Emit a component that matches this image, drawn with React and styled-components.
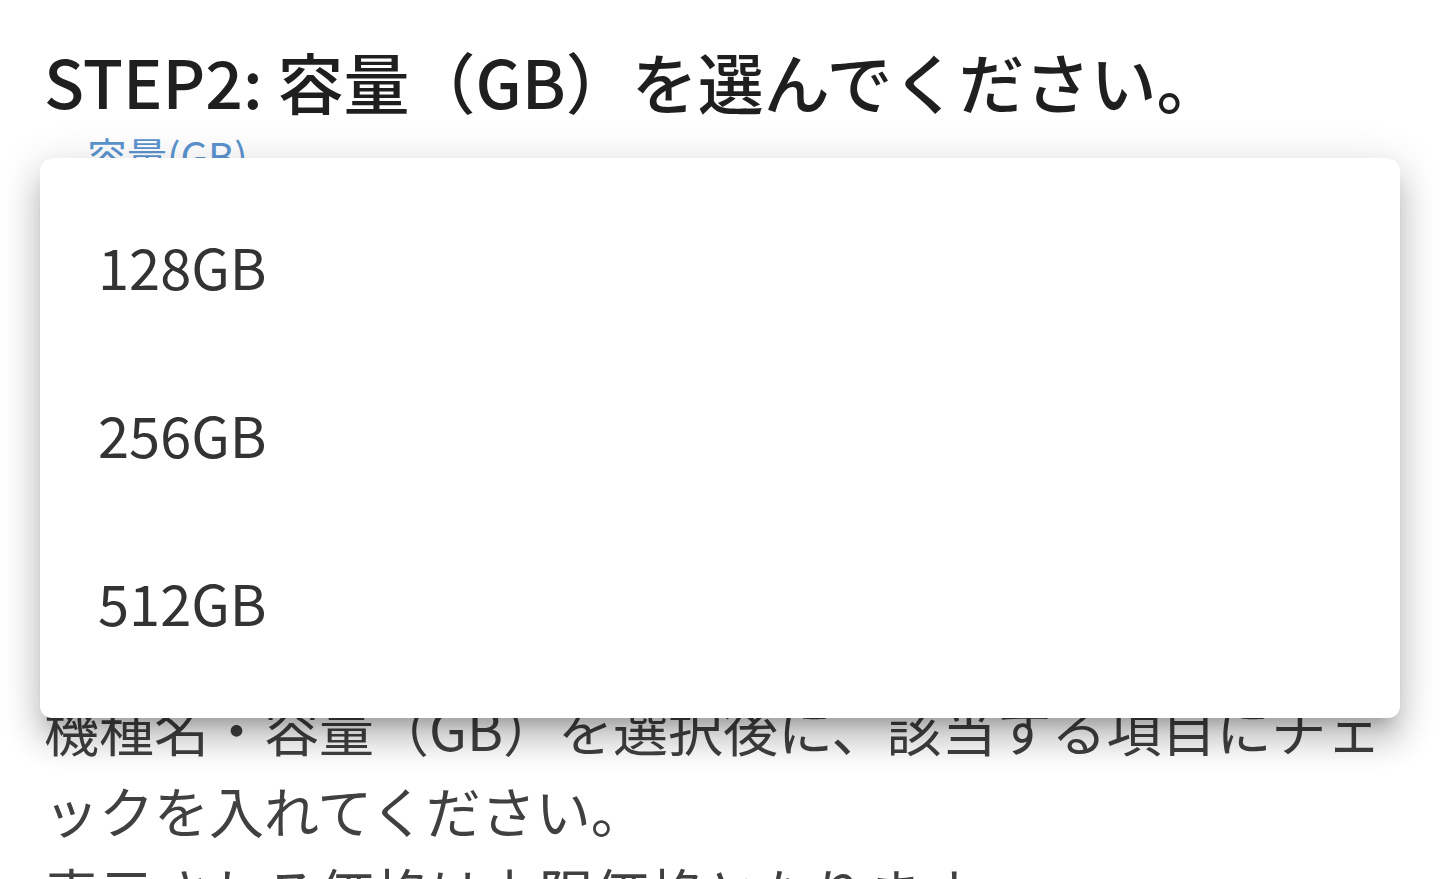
import React from 'react';
import styled, { createGlobalStyle } from 'styled-components';

const GlobalStyle = createGlobalStyle`
  html, body {
    margin: 0;
    padding: 0;
    background: #ffffff;
    font-family: "Noto Sans CJK JP", "Noto Sans", sans-serif;
    color: #2b2b2b;
    overflow: hidden;
  }
`;

const Page = styled.div`
  height: 879px;
  padding: 34px 40px 0 44px;
  box-sizing: border-box;
  overflow: hidden;
`;

const Title = styled.h2`
  margin: 0;
  font-size: 66px;
  line-height: 92px;
  font-weight: 500;
  color: #1f1f1f;
`;

const SelectWrap = styled.div`
  position: relative;
  margin: 32px 0 0 -4px;
`;

const Outlined = styled.div`
  position: relative;
  height: 168px;
  border: 3px solid #c9d6e3;
  border-radius: 12px;
  box-sizing: border-box;
`;

const FloatLabel = styled.span`
  position: absolute;
  top: -30px;
  left: 30px;
  padding: 0 14px;
  background: #ffffff;
  font-size: 40px;
  line-height: 48px;
  color: #5b94cf;
`;

const Menu = styled.ul`
  position: absolute;
  top: 0;
  left: 0;
  right: 0;
  margin: 0;
  padding: 23px 0 33px;
  list-style: none;
  background: #ffffff;
  border-radius: 12px;
  box-shadow: 0 15px 15px -9px rgba(0, 0, 0, 0.2),
    0 24px 30px 3px rgba(0, 0, 0, 0.14),
    0 9px 42px 6px rgba(0, 0, 0, 0.12);
  z-index: 10;
`;

const Option = styled.li`
  height: 168px;
  display: flex;
  align-items: center;
  padding-left: 58px;
  font-size: 56px;
  font-weight: 400;
  color: #333333;
  background: ${(p) => (p.selected ? 'rgba(25, 118, 210, 0.08)' : 'transparent')};
`;

const Hidden = styled.div`
  height: 360px;
`;

const Note = styled.p`
  margin: 0;
  font-size: 55px;
  line-height: 82px;
  color: #404040;
`;

const options = ['128GB', '256GB', '512GB'];

export default function App() {
  return (
    <>
      <GlobalStyle />
      <Page>
        <Title>STEP2: 容量（GB）を選んでください。</Title>
        <SelectWrap>
          <Outlined>
            <FloatLabel>容量(GB)</FloatLabel>
          </Outlined>
          <Menu role="listbox">
            {options.map((o) => (
              <Option key={o}>{o}</Option>
            ))}
          </Menu>
          <Hidden />
        </SelectWrap>
        <Note>
          機種名・容量（GB）を選択後に、該当する項目にチェックを入れてください。
          <br />
          表示される価格は上限価格となります。
        </Note>
      </Page>
    </>
  );
}
